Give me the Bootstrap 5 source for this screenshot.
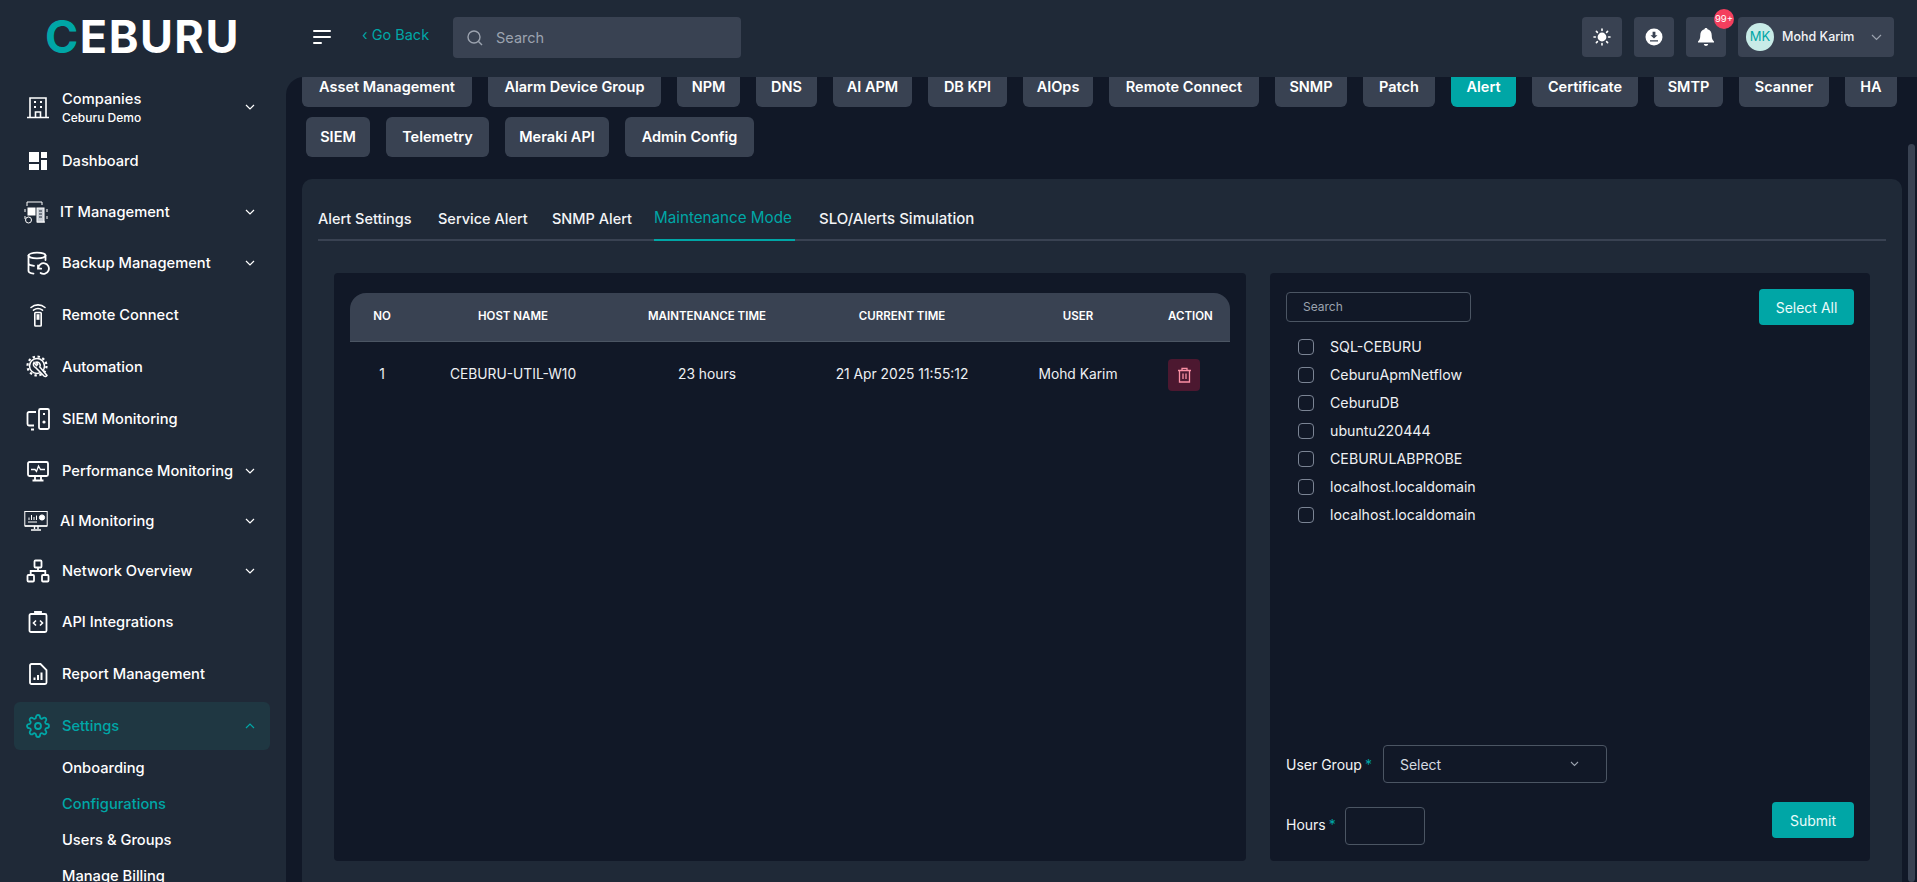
<!DOCTYPE html>
<html lang="en">
<head>
<meta charset="utf-8">
<title>Ceburu</title>
<link href="https://cdn.jsdelivr.net/npm/bootstrap@5.3.0/dist/css/bootstrap.min.css" rel="stylesheet">
<style>
:root{--panel:#1f2937;--deep:#111827;--raised:#394252;--teal:#00a6a6;--ink:#f3f4f6;}
html,body{height:100%;}
body{background:var(--panel);color:var(--ink);font-family:Inter,"Noto Sans",sans-serif;font-size:14px;overflow:hidden;}
.shell{display:grid;grid-template-columns:286px 1fr;grid-template-rows:77px 805px;height:882px;}
.brand{font-size:45px;font-weight:700;line-height:32px;letter-spacing:1.5px;padding:21px 0 0 45px;color:#fff;}
.brand span{color:var(--teal);}
.topbar{padding:17px 23px 0 27px;}
.burger{width:18px;margin-right:31px;margin-top:13px;}
.burger i{display:block;height:2px;background:#fff;margin-bottom:4px;border-radius:1px;}
.burger i:last-child{width:9px;margin-bottom:0;}
.goback{color:var(--teal);font-size:14.5px;width:91px;margin-top:7px;}
.searchbox{width:288px;height:41px;background:var(--raised);border-radius:4px;padding-left:14px;color:#9ca3af;font-size:14.5px;gap:13px;}
.topicon{width:40px;height:40px;background:var(--raised);border-radius:4px;}
.badge-count{position:absolute;top:-8px;right:-8px;width:20px;height:20px;border-radius:50%;background:#f43f5e;color:#fff;font-size:9.5px;display:flex;align-items:center;justify-content:center;}
.userchip{width:156px;height:40px;background:var(--raised);border-radius:4px;padding:0 12px 0 8px;margin-left:12px;font-size:12.5px;font-weight:500;}
.avatar{width:28px;height:28px;border-radius:50%;background:#c8ebe7;color:#00a6a6;font-size:13px;font-weight:400;margin-right:8px;}
.sidenav{padding:4px 16px 0 14px;overflow:hidden;}
.navrow{height:48px;margin-bottom:4px;padding:0 15px 0 12px;border-radius:6px;color:#fff;font-size:14.7px;font-weight:500;}
.navrow>svg:first-child{width:24px;height:24px;flex:none;margin-right:12px;}
.navrow .chev{margin-left:auto;flex:none;}
.navrow.tall{height:52px;}
.navrow.short{height:46px;}
.navrow.offset>svg:first-child{margin-left:-2px;}
.navrow.up{margin-top:-1px;}
.navrow.down{margin-top:3px;}
.navrow.on{color:var(--teal);background:#1f3742;margin-bottom:0;}
.companysub{font-size:12px;line-height:16px;margin-top:-1px;}
.subnav{padding:0 0 0 48px;}
.subnav a{display:block;height:36px;line-height:36px;color:#fff;text-decoration:none;font-weight:500;font-size:14.7px;}
.subnav a.on{color:var(--teal);}
.mainarea{background:var(--deep);border-top-left-radius:18px;position:relative;overflow:hidden;padding:0 15px 0 16px;}
.scrollthumb{position:absolute;right:2px;top:67px;bottom:0;width:7px;background:var(--raised);border-radius:4px;}
.tabrows{margin-top:-10px;}
.pillrow{display:flex;gap:16px;margin-bottom:10px;}
.pillrow.second{padding-left:4px;}
.pillbtn{height:40px;flex:none;background:var(--raised);border:0;border-radius:6px;color:#fff;font-weight:600;font-size:14.5px;padding:0;white-space:nowrap;}
.pillbtn.on{background:var(--teal);}
.firstrow .pillbtn:nth-child(1){width:170px}
.firstrow .pillbtn:nth-child(2){width:173px}
.firstrow .pillbtn:nth-child(3){width:63px}
.firstrow .pillbtn:nth-child(4){width:61px}
.firstrow .pillbtn:nth-child(5){width:79px}
.firstrow .pillbtn:nth-child(6){width:79px}
.firstrow .pillbtn:nth-child(7){width:70px}
.firstrow .pillbtn:nth-child(8){width:150px}
.firstrow .pillbtn:nth-child(9){width:72px}
.firstrow .pillbtn:nth-child(10){width:72px}
.firstrow .pillbtn:nth-child(11){width:65px}
.firstrow .pillbtn:nth-child(12){width:106px}
.firstrow .pillbtn:nth-child(13){width:69px}
.firstrow .pillbtn:nth-child(14){width:90px}
.firstrow .pillbtn:nth-child(15){width:52px}
.second .pillbtn:nth-child(1){width:64px}
.second .pillbtn:nth-child(2){width:103px}
.second .pillbtn:nth-child(3){width:104px}
.second .pillbtn:nth-child(4){width:129px}
.sheet{background:var(--panel);border-radius:10px;margin-top:22px;height:720px;padding:16px 16px 0;}
.subtabs{height:46px;border-bottom:2px solid var(--raised);gap:24px;font-size:14.5px;font-weight:500;}
.subtabs span{height:46px;line-height:48px;display:block;white-space:nowrap;}
.subtabs span:nth-child(1){width:96px}
.subtabs span:nth-child(2){width:90px}
.subtabs span:nth-child(3){width:78px}
.subtabs span:nth-child(4){width:141px}
.subtabs span:nth-child(5){width:156px;font-size:15px;}
.subtabs span.on{color:var(--teal);border-bottom:2px solid var(--teal);font-weight:400;font-size:15.2px;line-height:45px;}
.split{display:grid;grid-template-columns:912px 600px;gap:24px;padding:32px 16px 0;}
.deepbox{background:var(--deep);height:588px;border-radius:4px;}
.leftbox{padding:20px 16px;}
.hosttable{width:880px;table-layout:fixed;border-collapse:separate;border-spacing:0;color:#eef0f3;}
.hosttable col:nth-child(1){width:64px}
.hosttable col:nth-child(2){width:198px}
.hosttable col:nth-child(3){width:190px}
.hosttable col:nth-child(4){width:200px}
.hosttable col:nth-child(5){width:152px}
.hosttable col:nth-child(6){width:76px}
.hosttable th{background:var(--raised);height:49px;border-bottom:1px solid #4b5563;font-size:11.5px;font-weight:600;color:#fff;text-align:center;padding:0;}
.hosttable th:first-child{border-top-left-radius:16px;}
.hosttable th:last-child{border-top-right-radius:16px;text-align:left;padding-left:14px;}
.hosttable td{height:65px;text-align:center;padding:0;font-size:13.8px;}
.hosttable td:last-child{text-align:left;padding-left:14px;}
.trashbtn{width:32px;height:32px;background:#4c1830;border:0;border-radius:4px;padding:0;display:inline-flex;align-items:center;justify-content:center;}
.rightbox{padding:16px;display:flex;flex-direction:column;}
.hostsearch{width:185px;height:30px;background:transparent;border:1px solid #4b5563;border-radius:4px;color:#9ca3af;font-size:12px;padding:0 16px;line-height:28px;margin-top:3px;}
.tealbtn{background:var(--teal);border:0;border-radius:4px;color:#e9fbfa;font-size:14px;height:36px;padding:0;}
.selectall{width:95px;}
.submitbtn{width:82px;margin-bottom:12px;}
.hostlist{margin-top:8px;padding-left:12px;}
.hostline{height:28px;display:flex;align-items:center;font-size:14.2px;color:#eef0f3;}
.hostline i{width:16px;height:16px;border:1px solid #7b8494;border-radius:4px;margin-right:16px;flex:none;}
.req{color:var(--teal);margin-left:3px;}
.fakeselect{width:224px;height:38px;border:1px solid #4b5563;border-radius:4px;padding:0 27px 0 16px;margin-left:11px;font-size:14px;color:#d5dae1;}
.fakeinput{width:80px;height:38px;border:1px solid #4b5563;border-radius:4px;margin-left:9px;}
.formzone{margin-top:auto;}
.formlast{margin-top:24px;height:38px;}
.hourslabel{margin-bottom:4px;}
</style>
</head>
<body>
<div class="shell">
  <div class="brand"><span>C</span>EBURU</div>
  <header class="topbar d-flex align-items-start">
    <div class="burger"><i></i><i></i><i></i></div>
    <div class="goback">‹ Go Back</div>
    <div class="searchbox d-flex align-items-center">
      <svg width="16" height="16" viewBox="0 0 16 16" fill="none" stroke="#9ca3af" stroke-width="1.4"><circle cx="7" cy="7" r="6"/><path d="M11.5 11.5 15 15"/></svg>
      <span>Search</span>
    </div>
    <div class="ms-auto d-flex align-items-center gap-2">
      <div class="topicon d-flex align-items-center justify-content-center me-1"><svg width="18" height="18" viewBox="0 0 18 18" fill="#fff" stroke="#fff" stroke-width="1.6"><circle cx="9" cy="9" r="3.6"/><path stroke-linecap="round" d="M9 1v1.4M9 15.6V17M1 9h1.4M15.6 9H17M3.4 3.4l1 1M13.6 13.6l1 1M3.4 14.6l1-1M13.6 4.4l1-1"/></svg></div>
      <div class="topicon d-flex align-items-center justify-content-center me-1"><svg width="18" height="18" viewBox="0 0 18 18"><circle cx="9" cy="9" r="8.5" fill="#fff"/><path d="M7.6 3.8h2.8v3.4h2.1L9 10.6 5.5 7.2h2.1zM5 12.2h8v1.4H5z" fill="#394252"/></svg></div>
      <div class="topicon position-relative d-flex align-items-center justify-content-center"><svg width="18" height="20" viewBox="0 0 18 20" fill="#fff"><path d="M9 1c.8 0 1.4.5 1.5 1.2 2.7.7 4.2 3 4.2 5.8 0 3.2.7 5 2.3 6.6v.9H1v-.9C2.6 13 3.300 11.200 3.300 8c0-2.800 1.500-5.100 4.200-5.800C7.600 1.500 8.200 1 9 1zM6.800 17h4.400c-.2 1.200-1.100 2-2.200 2s-2-.8-2.200-2z"/></svg><span class="badge-count">99+</span></div>
    </div>
    <div class="userchip d-flex align-items-center">
      <span class="avatar d-flex align-items-center justify-content-center">MK</span>
      <span>Mohd Karim</span>
      <svg class="ms-auto" width="11" height="7" viewBox="0 0 11 7" fill="none" stroke="#9ca3af" stroke-width="1.2"><path d="m1 1 4.500 4.500L10 1"/></svg>
    </div>
  </header>

  <nav class="sidenav">
    <div class="navrow tall d-flex align-items-center">
      <svg viewBox="0 0 24 24" fill="none" stroke="#fff" stroke-width="1.6"><path d="M1 22.500h22M4 22V3h16v19M9.500 22v-5h5v5"/><path stroke-width="2" d="M8 7h2M14 7h2M8 12h2M14 12h2"/></svg>
      <div><div>Companies</div><div class="companysub">Ceburu Demo</div></div>
      <svg class="chev" width="10" height="6" viewBox="0 0 10 6" fill="none" stroke="#fff" stroke-width="1.200"><path d="m1 1 4 4 4-4"/></svg>
    </div>
    <div class="navrow d-flex align-items-center">
      <svg viewBox="0 0 24 24" fill="#fff"><path d="M3 3h10v10H3zM15 3h6v6h-6zM3 15h10v6H3zM15 11h6v10h-6z"/></svg>
      <span>Dashboard</span>
    </div>
    <div class="navrow short offset d-flex align-items-center">
      <svg viewBox="0 0 24 24" fill="none" stroke="#fff" stroke-width="1"><path d="M3 6V2h15v3M1 9v3M23 9v3M1 16v3M23 16v3M13 22h8"/><rect x="4" y="8" width="7" height="7" fill="#fff"/><rect x="13" y="8" width="7" height="14" fill="#c9ced6"/><circle cx="4.500" cy="20" r="3"/><path d="M15 11h3M15 14h3M15 17h3" stroke="#1f2937"/></svg>
      <span>IT Management</span>
      <svg class="chev" width="10" height="6" viewBox="0 0 10 6" fill="none" stroke="#fff" stroke-width="1.200"><path d="m1 1 4 4 4-4"/></svg>
    </div>
    <div class="navrow d-flex align-items-center">
      <svg viewBox="0 0 24 24" fill="none" stroke="#fff" stroke-width="1.800" stroke-linecap="round"><ellipse cx="11" cy="4.500" rx="8.500" ry="2.800"/><path d="M2.500 4.500V20c0 1.300 2 2.300 5 2.700M19.500 4.500V9M2.500 12c0 1.400 2.500 2.500 5.500 2.800"/><path d="M12.300 17.500a5.300 5.300 0 1 1 2.300 4.400M12 14.500v3.200h3.200"/></svg>
      <span>Backup Management</span>
      <svg class="chev" width="10" height="6" viewBox="0 0 10 6" fill="none" stroke="#fff" stroke-width="1.200"><path d="m1 1 4 4 4-4"/></svg>
    </div>
    <div class="navrow d-flex align-items-center">
      <svg viewBox="0 0 24 24" fill="none" stroke="#fff" stroke-width="1.600" stroke-linecap="round"><rect x="8.800" y="9.500" width="6.400" height="13.500" rx=".8"/><path d="M11.300 12h1.400v4h-1.400z" fill="#fff"/><path d="M5 4.500c4-3.500 10-3.500 14 0M7.500 7.200c2.700-2 6.300-2 9 0"/></svg>
      <span>Remote Connect</span>
    </div>
    <div class="navrow d-flex align-items-center">
      <svg viewBox="0 0 24 24" fill="none" stroke="#fff" stroke-width="1.500"><circle cx="11" cy="11" r="7.500"/><circle cx="11" cy="11" r="9.500" stroke-width="2.200" stroke-dasharray="2.400 2.600"/><path d="M8 7.500a3.300 3.300 0 0 0 1.500 5l8.500 8.500c1 .9 2.400.5 3-.6L13.800 12a3.300 3.300 0 0 0-3.800-4.800l1.700 2-1.200 1.400z" fill="#1f2937"/></svg>
      <span>Automation</span>
    </div>
    <div class="navrow d-flex align-items-center">
      <svg viewBox="0 0 24 24" fill="none" stroke="#fff" stroke-width="1.800"><path d="M10 5H3a1.500 1.500 0 0 0-1.500 1.500V17A1.500 1.500 0 0 0 3 18.500h5M5 22.500h3"/><rect x="13" y="2" width="10" height="20" rx="1.500"/><path d="M17 7h2"/><circle cx="18" cy="15" r="1.600" fill="#fff" stroke="none"/></svg>
      <span>SIEM Monitoring</span>
    </div>
    <div class="navrow d-flex align-items-center">
      <svg viewBox="0 0 24 24" fill="none" stroke="#fff" stroke-width="1.800"><rect x="2" y="3" width="20" height="14" rx="1.500"/><path d="M5 10.500h4l1.500 2 2-5.500 2 3.500H19" stroke-width="1.300"/><path d="M9 17v4M15 17v4M6.500 21.500h11"/></svg>
      <span class="text-nowrap">Performance Monitoring</span>
      <svg class="chev" width="10" height="6" viewBox="0 0 10 6" fill="none" stroke="#fff" stroke-width="1.200"><path d="m1 1 4 4 4-4"/></svg>
    </div>
    <div class="navrow short offset up d-flex align-items-center">
      <svg viewBox="0 0 24 24" fill="none" stroke="#fff" stroke-width="1"><rect x=".8" y="2.500" width="22.400" height="14.500"/><path d="M1 17h22M10.500 17v3M14 17v3M7 21h10" stroke-width="1.400"/><path d="M4 13h9M5 11V8.500M7.500 11V6M10 11V8M12.500 11V6.500" stroke-width="1"/><circle cx="18" cy="8.500" r="2.600" fill="#fff"/></svg>
      <span>AI Monitoring</span>
      <svg class="chev" width="10" height="6" viewBox="0 0 10 6" fill="none" stroke="#fff" stroke-width="1.200"><path d="m1 1 4 4 4-4"/></svg>
    </div>
    <div class="navrow short d-flex align-items-center">
      <svg viewBox="0 0 24 24" fill="none" stroke="#fff" stroke-width="1.800"><rect x="8.500" y="1.500" width="7" height="7" rx="1"/><rect x="1.500" y="16" width="6.500" height="6.500" rx="1"/><rect x="16" y="16" width="6.500" height="6.500" rx="1"/><path d="M12 8.500v3.500M4.700 16v-4h14.600v4"/></svg>
      <span>Network Overview</span>
      <svg class="chev" width="10" height="6" viewBox="0 0 10 6" fill="none" stroke="#fff" stroke-width="1.200"><path d="m1 1 4 4 4-4"/></svg>
    </div>
    <div class="navrow down d-flex align-items-center">
      <svg viewBox="0 0 24 24" fill="none" stroke="#fff" stroke-width="1.800"><rect x="3.500" y="4" width="17" height="18" rx="1.500"/><path d="M9 4V2h6v2"/><path d="m10 10.500-2.500 2.500 2.500 2.500M14 10.500l2.500 2.500-2.500 2.500" stroke-width="1.600"/></svg>
      <span>API Integrations</span>
    </div>
    <div class="navrow d-flex align-items-center">
      <svg viewBox="0 0 24 24" fill="none" stroke="#fff" stroke-width="1.800"><path d="M5.500 2h9l6 6v12.500a1.500 1.500 0 0 1-1.500 1.500H5.500A1.500 1.500 0 0 1 4 20.500v-17A1.500 1.500 0 0 1 5.500 2z"/><path d="M8.500 18v-2.500M12 18v-5M15.500 18v-7.500" stroke-width="2"/></svg>
      <span>Report Management</span>
    </div>
    <div class="navrow on d-flex align-items-center">
      <svg viewBox="0 0 24 24" fill="none" stroke="#00a6a6" stroke-width="1.800" stroke-linecap="round" stroke-linejoin="round"><path d="M12 15a3 3 0 1 0 0-6 3 3 0 0 0 0 6z"/><path d="M19.400 15a1.650 1.650 0 0 0 .33 1.820l.06.06a2 2 0 0 1 0 2.830 2 2 0 0 1-2.830 0l-.06-.06a1.650 1.650 0 0 0-1.820-.33 1.650 1.650 0 0 0-1 1.510V21a2 2 0 0 1-2 2 2 2 0 0 1-2-2v-.09A1.650 1.650 0 0 0 9 19.400a1.650 1.650 0 0 0-1.820.33l-.06.06a2 2 0 0 1-2.830 0 2 2 0 0 1 0-2.830l.06-.06a1.650 1.650 0 0 0 .33-1.820 1.650 1.650 0 0 0-1.510-1H3a2 2 0 0 1-2-2 2 2 0 0 1 2-2h.09A1.650 1.650 0 0 0 4.600 9a1.650 1.650 0 0 0-.33-1.820l-.06-.06a2 2 0 0 1 0-2.830 2 2 0 0 1 2.830 0l.06.06a1.650 1.650 0 0 0 1.820.33H9a1.650 1.650 0 0 0 1-1.510V3a2 2 0 0 1 2-2 2 2 0 0 1 2 2v.09a1.650 1.650 0 0 0 1 1.510 1.650 1.650 0 0 0 1.820-.33l.06-.06a2 2 0 0 1 2.830 0 2 2 0 0 1 0 2.830l-.06.06a1.650 1.650 0 0 0-.33 1.820V9a1.650 1.650 0 0 0 1.510 1H21a2 2 0 0 1 2 2 2 2 0 0 1-2 2h-.09a1.650 1.650 0 0 0-1.510 1z"/></svg>
      <span>Settings</span>
      <svg class="chev" width="10" height="6" viewBox="0 0 10 6" fill="none" stroke="#00a6a6" stroke-width="1.200"><path d="m1 5 4-4 4 4"/></svg>
    </div>
    <div class="subnav">
      <a href="#">Onboarding</a>
      <a href="#" class="on">Configurations</a>
      <a href="#">Users &amp; Groups</a>
      <a href="#">Manage Billing</a>
    </div>
  </nav>

  <main class="mainarea">
    <div class="scrollthumb"></div>
    <div class="tabrows">
      <div class="pillrow firstrow">
        <button class="pillbtn">Asset Management</button>
        <button class="pillbtn">Alarm Device Group</button>
        <button class="pillbtn">NPM</button>
        <button class="pillbtn">DNS</button>
        <button class="pillbtn">AI APM</button>
        <button class="pillbtn">DB KPI</button>
        <button class="pillbtn">AIOps</button>
        <button class="pillbtn">Remote Connect</button>
        <button class="pillbtn">SNMP</button>
        <button class="pillbtn">Patch</button>
        <button class="pillbtn on">Alert</button>
        <button class="pillbtn">Certificate</button>
        <button class="pillbtn">SMTP</button>
        <button class="pillbtn">Scanner</button>
        <button class="pillbtn">HA</button>
      </div>
      <div class="pillrow second">
        <button class="pillbtn">SIEM</button>
        <button class="pillbtn">Telemetry</button>
        <button class="pillbtn">Meraki API</button>
        <button class="pillbtn">Admin Config</button>
      </div>
    </div>
    <section class="sheet">
      <div class="subtabs d-flex">
        <span>Alert Settings</span><span>Service Alert</span><span>SNMP Alert</span><span class="on">Maintenance Mode</span><span>SLO/Alerts Simulation</span>
      </div>
      <div class="split">
        <div class="deepbox leftbox">
          <table class="hosttable">
            <colgroup><col><col><col><col><col><col></colgroup>
            <thead><tr><th>NO</th><th>HOST NAME</th><th>MAINTENANCE TIME</th><th>CURRENT TIME</th><th>USER</th><th>ACTION</th></tr></thead>
            <tbody><tr><td>1</td><td>CEBURU-UTIL-W10</td><td>23 hours</td><td>21 Apr 2025 11:55:12</td><td>Mohd Karim</td><td><button class="trashbtn" aria-label="Delete"><svg width="15" height="16" viewBox="0 0 15 16" fill="none" stroke="#fb8fa4" stroke-width="1.300"><path d="M1 3.500h13M5 3.500V1.300h5v2.200M2.500 3.500V15h10V3.500M6 6.500v5.500M9 6.500v5.500"/></svg></button></td></tr></tbody>
          </table>
        </div>
        <div class="deepbox rightbox">
          <div class="d-flex justify-content-between align-items-start">
            <div class="hostsearch">Search</div>
            <button class="tealbtn selectall">Select All</button>
          </div>
          <div class="hostlist">
            <div class="hostline"><i></i>SQL-CEBURU</div>
            <div class="hostline"><i></i>CeburuApmNetflow</div>
            <div class="hostline"><i></i>CeburuDB</div>
            <div class="hostline"><i></i>ubuntu220444</div>
            <div class="hostline"><i></i>CEBURULABPROBE</div>
            <div class="hostline"><i></i>localhost.localdomain</div>
            <div class="hostline"><i></i>localhost.localdomain</div>
          </div>
          <div class="formzone">
            <div class="d-flex align-items-center">
              <span>User Group<span class="req">*</span></span>
              <div class="fakeselect d-flex align-items-center justify-content-between"><span>Select</span><svg width="9" height="6" viewBox="0 0 9 6" fill="none" stroke="#9ca3af" stroke-width="1.100"><path d="m1 1 3.500 3.500L8 1"/></svg></div>
            </div>
            <div class="d-flex align-items-center formlast">
              <span class="hourslabel">Hours<span class="req">*</span></span>
              <div class="fakeinput"></div>
              <button class="tealbtn submitbtn ms-auto">Submit</button>
            </div>
          </div>
        </div>
      </div>
    </section>
  </main>
</div>
</body>
</html>
